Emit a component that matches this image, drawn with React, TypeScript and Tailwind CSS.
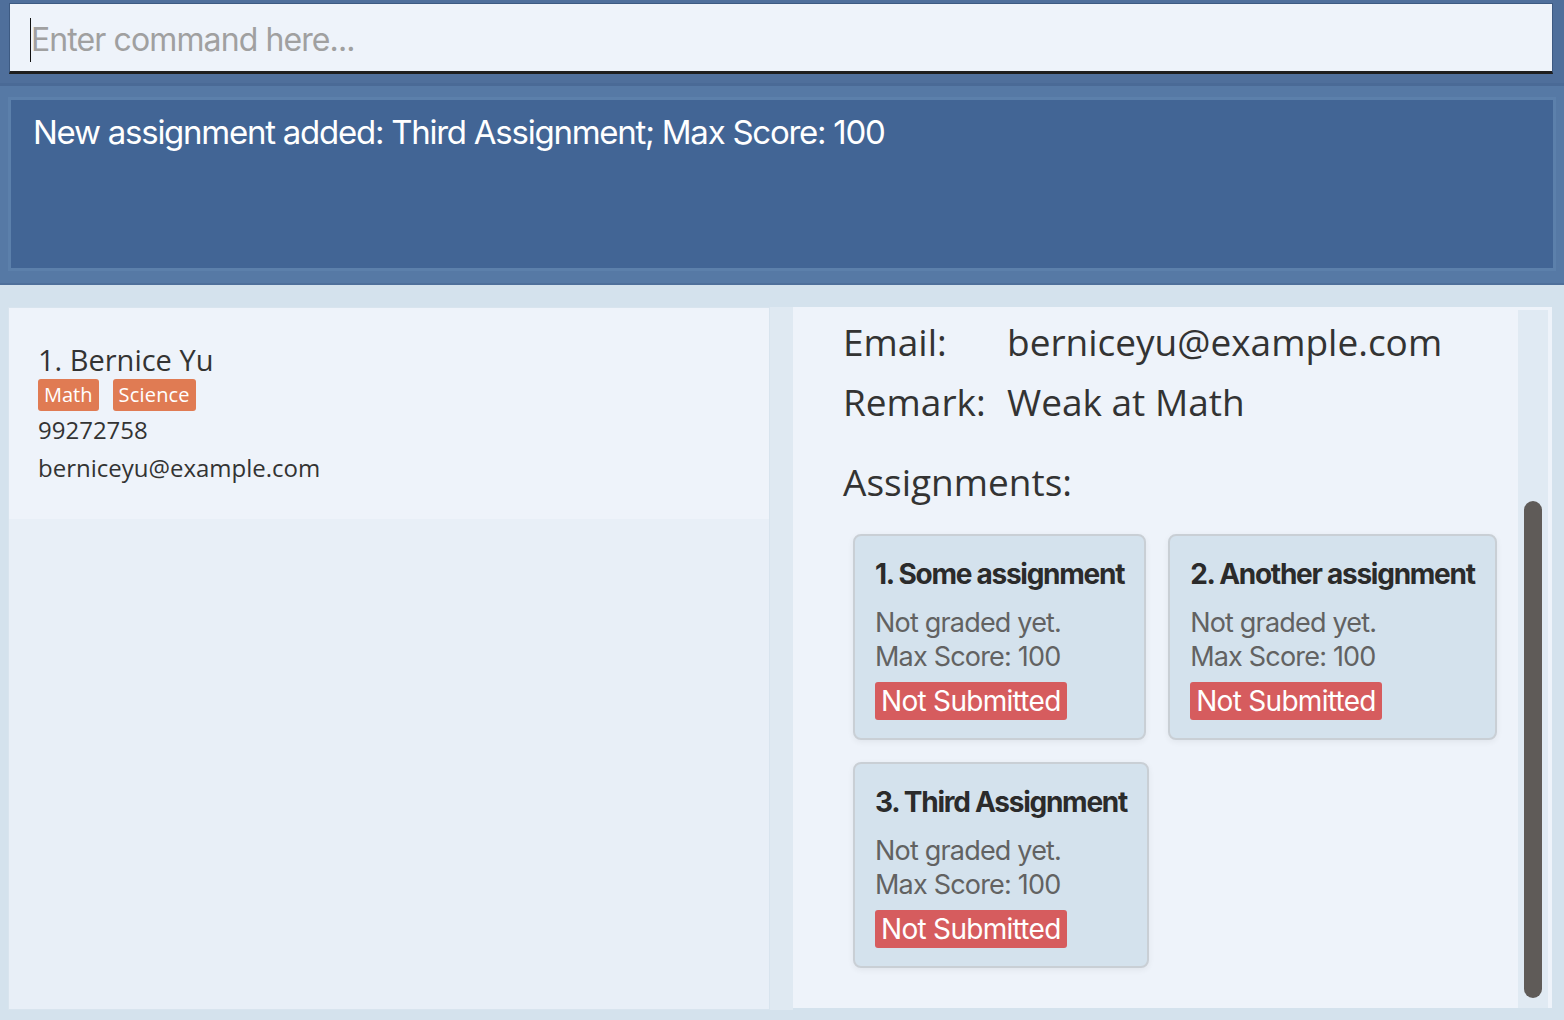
import React from 'react'

const assignments = [
  { id: 1, name: 'Some assignment', max: 100 },
  { id: 2, name: 'Another assignment', max: 100 },
  { id: 3, name: 'Third Assignment', max: 100 },
]

function AssignmentCard({ id, name, max }: { id: number; name: string; max: number }) {
  return (
    <div className="h-[206px] rounded-[8px] border-2 border-[#c9cfd5] bg-[#d4e2ed] pl-[20px] pr-[20px] pt-[18px] shadow-[0_2px_6px_rgba(0,0,0,0.06)]">
      <div className="text-[28px] leading-[40px] font-bold tracking-[-0.045em] text-[#2b2b2b] whitespace-nowrap">
        {id}. {name}
      </div>
      <div className="mt-[12px] text-[27px] leading-[34px] tracking-[-0.03em] text-[#626262]">Not graded yet.</div>
      <div className="text-[27px] leading-[34px] tracking-[-0.03em] text-[#626262]">Max Score: {max}</div>
      <div className="mt-[8px] inline-block rounded-[3px] bg-[#d65c5e] px-[6px] text-[28px] leading-[38px] tracking-[-0.025em] text-white">
        Not Submitted
      </div>
    </div>
  )
}

export default function App() {
  return (
    <div
      className="flex h-[1020px] w-full flex-col overflow-hidden bg-[#d4e2ed]"
      style={{ fontFamily: 'Inter, "Liberation Sans", sans-serif' }}
    >
      {/* command box */}
      <div className="h-[86px] border-b-[3px] border-[#4a6a96] bg-[#4f6f9b] pl-[9px] pr-[11px] pt-[3px]">
        <div className="flex h-[71px] items-center border border-b-[3px] border-[#3d5a82] border-b-[#1e1e1e] bg-[#eef3fa] pl-[20px] pt-[4px]">
          <span className="h-[44px] w-[1px] bg-[#111]" />
          <span className="text-[32px] tracking-[-0.028em] text-[#a0a0a0]">Enter command here...</span>
        </div>
      </div>

      {/* result display */}
      <div className="h-[199px] bg-[#5679a5] px-[8px] pt-[11px] pb-[12px] border-b-[2px] border-[#4e6f9a]">
        <div className="h-full border-[3px] border-[#5c80ab] bg-[#426595] px-[22px] pt-[11px]">
          <div className="text-[33px] leading-[42px] tracking-[-0.038em] text-white">
            New assignment added: Third Assignment; Max Score: 100
          </div>
        </div>
      </div>

      {/* main split */}
      <div className="flex flex-1 pl-[8px] pt-[22px] pb-[10px]">
        {/* person list */}
        <div className="flex w-[762px] flex-col border border-[#d8e4ee] bg-[#e8eff7]">
          <div
            className="h-[211px] bg-[#eef3fa] pl-[29px] pt-[33px] text-[#333]"
            style={{ fontFamily: '"Open Sans", "Noto Sans", sans-serif' }}
          >
            <div className="text-[29px] leading-[38px]">1. Bernice Yu</div>
            <div className="flex gap-[14px]">
              <span className="rounded-[3px] bg-[#e07b53] px-[6px] text-[20px] leading-[32px] text-white">Math</span>
              <span className="rounded-[3px] bg-[#e07b53] px-[6px] text-[20px] leading-[32px] tracking-[0.01em] text-white">Science</span>
            </div>
            <div className="mt-[2px] text-[24px] leading-[34px]">99272758</div>
            <div className="mt-[2px] text-[24px] leading-[38px]">berniceyu@example.com</div>
          </div>
        </div>

        {/* divider */}
        <div className="w-[23px] bg-[#dfe9f2]" />

        {/* person detail */}
        <div className="mb-[2px] flex w-[759px] bg-[#eef3fa] pt-[3px]">
          <div
            className="flex-1 pl-[50px] pt-[2px] text-[#333]"
            style={{ fontFamily: '"Open Sans", "Noto Sans", sans-serif' }}
          >
            <div className="flex text-[37px] leading-[60px]">
              <span className="w-[164px]">Email:</span>
              <span>berniceyu@example.com</span>
            </div>
            <div className="flex text-[37px] leading-[60px]">
              <span className="w-[164px]">Remark:</span>
              <span>Weak at Math</span>
            </div>
            <div className="mt-[20px] text-[37px] leading-[60px]">Assignments:</div>
            <div
              className="mt-[22px] flex flex-wrap gap-[22px] pl-[10px]"
              style={{ fontFamily: 'Inter, "Liberation Sans", sans-serif' }}
            >
              {assignments.map((a) => (
                <AssignmentCard key={a.id} {...a} />
              ))}
            </div>
          </div>
          {/* scrollbar */}
          <div className="mr-[4px] flex w-[30px] flex-col bg-[#e0eaf3] px-[6px] pt-[191px] pb-[10px]">
            <div className="flex-1 rounded-[10px] bg-[#5f5b58]" />
          </div>
        </div>
      </div>
    </div>
  )
}
